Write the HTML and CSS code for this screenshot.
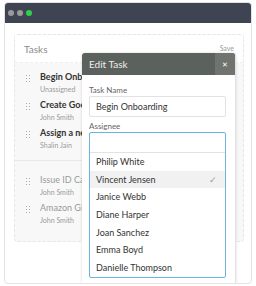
FILE: index.html
```html
<!DOCTYPE html>
<html lang="en">
<head>
  <meta charset="UTF-8" />
  <title>Tasks</title>
  <link rel="stylesheet" href="styles.css">
</head>
<body>
  <div class="window">
    <div class="titlebar">
      <span class="dot"></span><span class="dot"></span><span class="dot green"></span>
    </div>
    <div class="content">
      <div class="card">
        <div class="card-head">
          <span class="card-title">Tasks</span>
          <span class="save">Save</span>
        </div>
        <div class="list first">
          <div class="row"><span class="grip"></span><div><div class="t">Begin Onboarding</div><div class="s">Unassigned</div></div></div>
          <div class="row"><span class="grip"></span><div><div class="t">Create Google Account</div><div class="s">John Smith</div></div></div>
          <div class="row"><span class="grip"></span><div><div class="t">Assign a new Laptop</div><div class="s">Shalin Jain</div></div></div>
        </div>
        <div class="list done">
          <div class="row"><span class="grip"></span><div><div class="t">Issue ID Card</div><div class="s">John Smith</div></div></div>
          <div class="row"><span class="grip"></span><div><div class="t">Amazon Gift Card</div><div class="s">John Smith</div></div></div>
        </div>
      </div>
    </div>

    <div class="modal">
      <div class="modal-head">
        <span>Edit Task</span>
        <span class="close">&#x2715;</span>
      </div>
      <div class="modal-body">
        <div class="label">Task Name</div>
        <div class="input">Begin Onboarding</div>
        <div class="label second">Assignee</div>
        <div class="select">
          <div class="search"></div>
          <ul class="options">
            <li>Philip White</li>
            <li class="sel">Vincent Jensen <span class="check">&#x2713;</span></li>
            <li>Janice Webb</li>
            <li>Diane Harper</li>
            <li>Joan Sanchez</li>
            <li>Emma Boyd</li>
            <li>Danielle Thompson</li>
          </ul>
        </div>
      </div>
    </div>
  </div>
</body>
</html>
```
FILE: styles.css
```css
body { margin: 0; background: #fff; font-family: Lato, "Open Sans", sans-serif; }
.window { position: relative; margin: 2px 4px 0; width: 246px; height: 280px; border: 1px solid #e3e3e3; border-radius: 4px; overflow: hidden; background: #fff; }
.titlebar { height: 20px; background: #3e4452; display: flex; align-items: center; gap: 3px; padding-left: 3px; }
.dot { width: 6px; height: 6px; border-radius: 50%; background: #9a9a9a; }
.dot.green { background: #2fd04a; }
.content { padding: 11px 7px 0 9px; }
.card { width: 228px; height: 206px; border: 1px dashed #e6e6e6; border-radius: 4px; background: #f8f8f8; }
.card-head { height: 27px; display: flex; align-items: center; justify-content: space-between; padding: 0 9px 0 9px; background: #fff; border-bottom: 1px dashed #eee; }
.card-title { font-size: 10px; color: #8a8a8a; }
.save { font-size: 7px; color: #999; margin-top: -2px; }
.list { width: 67px; padding-left: 10px; box-sizing: border-box; overflow: hidden; }
.list.first { padding-top: 4px; }
.row { display: flex; align-items: flex-start; gap: 10px; height: 28px; padding-top: 2px; box-sizing: border-box; }
.grip { width: 5px; height: 8px; margin-top: 5px; background: radial-gradient(circle, #aaa 0.8px, transparent 0.9px) 0 0 / 3px 3px; flex: none; }
.t { font-size: 9px; font-weight: bold; color: #333; white-space: nowrap; line-height: 15px; }
.s { font-size: 7px; color: #9a9a9a; white-space: nowrap; line-height: 10px; }
.list.done { margin-top: 9px; padding-top: 9px; border-top: 1px solid #e8e8e8; }
.done .t { font-weight: normal; color: #9a9a9a; }
.modal { position: absolute; left: 77px; top: 50px; width: 153px; bottom: 0; background: #fff; border-radius: 3px 3px 0 0; box-shadow: 0 0 3px rgba(0,0,0,0.15); border-right: 1px solid #e2e2e2; }
.modal-head { height: 22px; background: #5b615d; color: #eee; font-size: 10px; display: flex; align-items: center; justify-content: space-between; padding-left: 7px; border-radius: 3px 3px 0 0; }
.close { width: 20px; height: 22px; background: #6f7470; display: flex; align-items: center; justify-content: center; font-size: 7px; color: #fff; border-top-right-radius: 3px; }
.modal-body { padding: 9px 9px 0 7px; }
.label { font-size: 8px; color: #666; line-height: 12px; }
.label.second { margin-top: 3px; }
.input { height: 19px; border: 1px solid #e2e2e2; border-radius: 2px; font-size: 9px; color: #333; line-height: 19px; padding-left: 6px; }
.select { border: 1px solid #6cb4e0; border-radius: 2px; overflow: hidden; }
.search { height: 19px; border-bottom: 1px solid #e2e2e2; }
.options { list-style: none; margin: 0; padding: 0; }
.options li { height: 17.7px; line-height: 17.7px; font-size: 9px; color: #333; padding: 0 8px 0 6px; display: flex; justify-content: space-between; }
.options li.sel { background: #f1f1f1; }
.check { color: #9a9a9a; font-size: 9px; }
```
